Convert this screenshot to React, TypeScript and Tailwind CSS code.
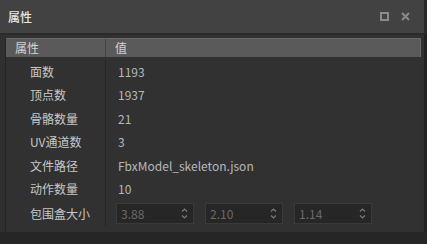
import React from "react";

const rows: { label: string; value: string }[] = [
  { label: "面数", value: "1193" },
  { label: "顶点数", value: "1937" },
  { label: "骨骼数量", value: "21" },
  { label: "UV通道数", value: "3" },
  { label: "文件路径", value: "FbxModel_skeleton.json" },
  { label: "动作数量", value: "10" },
];

const bounds = ["3.88", "2.10", "1.14"];

function SpinBox({ value }: { value: string }) {
  return (
    <div className="flex items-center justify-between w-[78px] h-[21px] bg-[#262626] border border-[#3a3a3a] pl-[4px] pr-[5px]">
      <span className="text-[12px] text-[#6a6a6a] leading-none">{value}</span>
      <svg width="7" height="13" viewBox="0 0 7 13" className="text-[#7a7a7a]">
        <path d="M1 4.5 L3.5 2 L6 4.5" fill="none" stroke="currentColor" strokeWidth="1.2" />
        <path d="M1 8.5 L3.5 11 L6 8.5" fill="none" stroke="currentColor" strokeWidth="1.2" />
      </svg>
    </div>
  );
}

export default function App() {
  return (
    <div
      className="w-[427px] h-[244px] bg-[#262626] flex flex-col overflow-hidden"
      style={{ fontFamily: '"Noto Sans CJK SC", "Noto Sans", sans-serif' }}
    >
      {/* Title bar */}
      <div className="h-[33px] bg-[#424242] flex items-center justify-between pl-[8px] pr-[14px] border-r-[3px] border-[#2a2a2a]">
        <span className="text-[12px] text-[#e8e8e8] font-medium">属性</span>
        <div className="flex items-center gap-[12px]">
          <svg width="9" height="9" viewBox="0 0 9 9">
            <rect x="1" y="1" width="7" height="7" fill="none" stroke="#8a8a8a" strokeWidth="2" />
          </svg>
          <svg width="9" height="9" viewBox="0 0 9 9">
            <path d="M1 1 L8 8 M8 1 L1 8" stroke="#8a8a8a" strokeWidth="2" />
          </svg>
        </div>
      </div>
      <div className="h-[2px] bg-[#2a2a2a]" />

      {/* Panel */}
      <div className="h-[197px] bg-[#303030] pt-[3px] pl-[5px] pr-[3px] border-r-[3px] border-[#222]">
        <div className="h-full border-l border-[#252525] bg-[#313131]">
          <div className="flex h-[19px] bg-[#5a5a5a] border-t border-r border-[#6a6a6a] text-[12px] text-[#d4d4d4]">
            <div className="w-[100px] pl-[9px] flex items-center border-r border-[#444]">属性</div>
            <div className="flex-1 pl-[9px] flex items-center">值</div>
          </div>
          <div className="pt-[3px]">
            {rows.map((r) => (
              <div key={r.label} className="flex h-[23.5px] text-[12px]">
                <div className="w-[100px] pl-[24px] flex items-center text-[#c8c8c8] border-r border-[#262626]">
                  {r.label}
                </div>
                <div className="flex-1 pl-[12px] flex items-center text-[#b4b8bc]">{r.value}</div>
              </div>
            ))}
            <div className="flex h-[25px] text-[12px]">
              <div className="w-[100px] pl-[24px] flex items-center text-[#c8c8c8] border-r border-[#262626]">
                包围盒大小
              </div>
              <div className="flex-1 pl-[10px] flex items-center gap-[11px]">
                {bounds.map((b) => (
                  <SpinBox key={b} value={b} />
                ))}
              </div>
            </div>
          </div>
        </div>
      </div>
    </div>
  );
}
